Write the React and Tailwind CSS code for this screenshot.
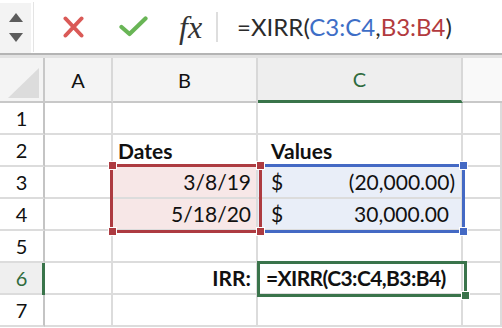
import React from "react";

const font = { fontFamily: "Lato, 'Open Sans', sans-serif" };

const HeaderCell = ({ children, selected, last }) => (
  <div
    className={
      "flex items-center justify-center text-[20px] h-[45px] " +
      (last ? "bg-[#f9f9f9] border-b-2 border-[#c8c8c8] " : "border-r-2 border-[#d8d8d8] ") +
      (selected
        ? "bg-[#eeeeee] text-[#2f6b3d] border-b-[3px] border-b-[#39744a]"
        : last
        ? ""
        : "bg-[#f4f4f4] text-[#111] border-b-2 border-b-[#c8c8c8]")
    }
  >
    {children}
  </div>
);

const RowHead = ({ n, active }) => (
  <div
    className={
      "h-[32px] flex items-center justify-center text-[20px] border-b-2 border-[#dcdcdc] border-r-2 border-r-[#c4c4c4] relative " +
      (active ? "bg-[#efefef] text-[#2f6b3d]" : "bg-white text-[#111]")
    }
  >
    {n}
    {active && <div className="absolute right-[-2px] top-0 h-[32px] w-[3px] bg-[#39744a]" />}
  </div>
);

const Cell = ({ children, className = "" }) => (
  <div className={"h-[32px] flex items-center border-b-2 border-r-2 border-[#dcdcdc] text-[21px] text-[#111] " + className}>
    {children}
  </div>
);

const Handle = ({ color, x, y, size = 9 }) => (
  <div
    className={"absolute border border-white " + color}
    style={{ left: x - size / 2, top: y - size / 2, width: size, height: size }}
  />
);

export default function App() {
  return (
    <div className="w-[502px] h-[328px] bg-white overflow-hidden" style={font}>
      {/* formula bar */}
      <div className="h-[53px] flex items-center bg-white">
        <div className="w-[33px] h-[50px] mt-[2px] bg-[#f3f3f3] border-r-2 border-r-white flex flex-col items-center justify-center gap-[11px]">
          <svg width="14" height="9" viewBox="0 0 14 9"><path d="M7 0 L14 9 L0 9 Z" fill="#5c5c5c" /></svg>
          <svg width="14" height="9" viewBox="0 0 14 9"><path d="M0 0 L14 0 L7 9 Z" fill="#5c5c5c" /></svg>
        </div>
        <div className="w-[1px] h-[50px] bg-[#e4e4e4]" />
        <div className="flex items-center ml-[29px]">
          <svg width="21" height="22" viewBox="0 0 21 22">
            <path d="M2.5 2.5 L18.5 19.5 M18.5 2.5 L2.5 19.5" stroke="#da5a57" strokeWidth="4" strokeLinecap="round" />
          </svg>
          <svg className="ml-[35px]" width="29" height="21" viewBox="0 0 29 21">
            <path d="M2.5 11 L10.5 18 L26.5 2.5" stroke="#69b556" strokeWidth="4.2" strokeLinecap="round" strokeLinejoin="round" fill="none" />
          </svg>
          <span
            className="ml-[31px] text-[32px] italic text-[#333] leading-none"
            style={{ fontFamily: "'Liberation Serif', serif" }}
          >
            fx
          </span>
          <div className="ml-[14px] w-[2px] h-[30px] bg-[#dedede]" />
          <div className="ml-[19px] text-[24px] text-[#2b2b2b]">
            =XIRR(<span className="text-[#3e6ec6]">C3:C4</span>,<span className="text-[#b23a3e]">B3:B4</span>)
          </div>
        </div>
      </div>
      <div className="h-[2px] bg-[#b4b4b4]" />
      <div className="h-[3px] bg-[#e2e2e2]" />

      {/* sheet */}
      <div className="relative">
        <div className="grid grid-cols-[45px_68px_145px_205px_1fr]">
          <div className="h-[45px] bg-[#f4f4f4] border-b-2 border-r-2 border-[#c8c8c8] flex items-end justify-end pr-[4px] pb-[3px]">
            <svg width="31" height="30" viewBox="0 0 31 30"><path d="M31 0 L31 30 L0 30 Z" fill="#dcdcdc" /></svg>
          </div>
          <HeaderCell>A</HeaderCell>
          <HeaderCell>B</HeaderCell>
          <HeaderCell selected>C</HeaderCell>
          <HeaderCell last />

          {[1, 2, 3, 4, 5, 6, 7].map((n) => (
            <React.Fragment key={n}>
              <RowHead n={n} active={n === 6} />
              <Cell />
              <Cell
                className={
                  (n === 3 || n === 4 ? "bg-[#f7e7e7] justify-end pr-[5px] " : "") +
                  (n === 2 ? "font-bold pl-[5px] pt-[2px] " : "") +
                  (n === 6 ? "font-bold justify-end pr-[5px]" : "")
                }
              >
                {n === 2 && "Dates"}
                {n === 3 && "3/8/19"}
                {n === 4 && "5/18/20"}
                {n === 6 && "IRR:"}
              </Cell>
              <Cell
                className={
                  (n === 3 || n === 4 ? "bg-[#e9eef8] justify-between pl-[13px] " : "") +
                  (n === 3 ? "pr-[6px] " : "") +
                  (n === 4 ? "pr-[12px] " : "") +
                  (n === 2 ? "font-bold pl-[13px] pt-[2px] " : "") +
                  (n === 6 ? "font-bold pl-[8px] tracking-[-0.6px]" : "")
                }
              >
                {n === 2 && "Values"}
                {(n === 3 || n === 4) && <span>$</span>}
                {n === 3 && <span>(20,000.00)</span>}
                {n === 4 && <span>30,000.00</span>}
                {n === 6 && "=XIRR(C3:C4,B3:B4)"}
              </Cell>
              <Cell className="border-r-0" />
            </React.Fragment>
          ))}
        </div>

        {/* blue range C3:C4 */}
        <div className="absolute left-[259px] top-[106px] w-[206px] h-[69px] border-[3px] border-[#4469c4]" />
        <Handle color="bg-[#4469c4]" x={463} y={107} />
        <Handle color="bg-[#4469c4]" x={463} y={173} />

        {/* red range B3:B4 */}
        <div className="absolute left-[110px] top-[106px] w-[152px] h-[69px] border-[3px] border-[#ad3b41]" />
        <Handle color="bg-[#ad3b41]" x={112} y={107} />
        <Handle color="bg-[#ad3b41]" x={260} y={107} />
        <Handle color="bg-[#ad3b41]" x={112} y={173} />
        <Handle color="bg-[#ad3b41]" x={260} y={173} />

        {/* active cell C6 */}
        <div className="absolute left-[257px] top-[203px] w-[210px] h-[36px] border-[3px] border-[#3a744b]" />
        <div className="absolute left-[461px] top-[233px] w-[9px] h-[9px] bg-[#3a744b] border border-white" />
      </div>
    </div>
  );
}
